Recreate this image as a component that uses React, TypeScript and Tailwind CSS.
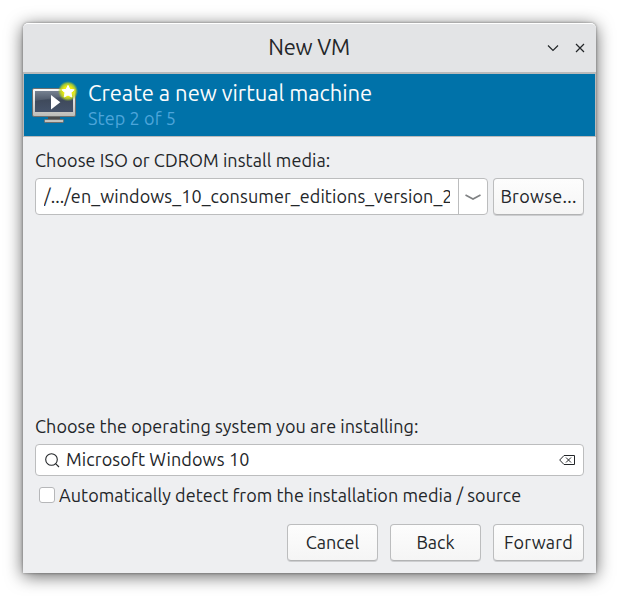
import type { ReactNode } from "react";

function MonitorIcon() {
  return (
    <svg width="48" height="46" viewBox="0 0 48 46" className="mt-[7px] block shrink-0">
      <defs>
        <linearGradient id="frame" x1="0" y1="0" x2="0" y2="1">
          <stop offset="0" stopColor="#fafafa" />
          <stop offset="1" stopColor="#bcbcb8" />
        </linearGradient>
        <linearGradient id="screen" x1="0" y1="0" x2="0" y2="1">
          <stop offset="0" stopColor="#6b7788" />
          <stop offset="0.45" stopColor="#3f4a5c" />
          <stop offset="1" stopColor="#46536a" />
        </linearGradient>
        <radialGradient id="glow">
          <stop offset="0" stopColor="#f8f800" />
          <stop offset="0.5" stopColor="#e8ea10" />
          <stop offset="0.75" stopColor="#c6d820" stopOpacity="0.8" />
          <stop offset="1" stopColor="#90c030" stopOpacity="0" />
        </radialGradient>
      </defs>
      <rect x="0.5" y="7.5" width="43" height="28" rx="1.5" fill="url(#frame)" stroke="#70706e" />
      <rect x="16" y="36" width="12" height="2.5" fill="#4c4c4c" />
      <rect x="12.5" y="38.5" width="19" height="3" rx="0.8" fill="#c4c4c0" stroke="#6e6e6c" />
      <rect x="3" y="10" width="38" height="21" fill="url(#screen)" />
      <path d="M3 10H41V14L3 20Z" fill="#fff" opacity="0.08" />
      <path d="M19 14L28.3 21.2L19 28.5Z" fill="#fff" />
      <circle cx="36" cy="10.2" r="10.2" fill="url(#glow)" />
      <path
        d="M36 4.4L37.8 8.3L42 8.8L39 11.8L39.8 16L36 14L32.2 16L33 11.8L30 8.8L34.2 8.3Z"
        fill="#fff"
        stroke="#fff"
        strokeLinejoin="round"
      />
    </svg>
  );
}

function Button({ children }: { children: ReactNode }) {
  return (
    <button className="flex h-[37px] w-[91px] shrink-0 items-center justify-center rounded-[4px] border border-[#bcbdbe] border-b-[#b2b3b4] bg-linear-to-b from-[#fdfdfd] to-[#f5f5f5] pb-px leading-6 whitespace-nowrap shadow-[0_1px_0_#cdced0]">
      {children}
    </button>
  );
}

export default function App() {
  return (
    <div className="h-[596px] w-[619px] overflow-hidden bg-white pt-[23px] pl-[23px] font-['Ubuntu','Noto_Sans',sans-serif] text-[18px] text-[#232629]">
      <div className="flex h-[550px] w-[573px] flex-col overflow-hidden rounded-t-[5px] bg-[#eeeff1] shadow-[0_3px_17px_rgba(0,0,0,0.62),0_0_3px_rgba(0,0,0,0.4)]">
        <header className="flex h-[49px] shrink-0 items-center rounded-t-[5px] border-t border-white bg-[#e3e4e6] pr-[11px]">
          <div className="w-[48px]" />
          <h1 className="flex-1 pb-[3px] text-center text-[22px] leading-7 tracking-[-0.25px]">New VM</h1>
          <div className="flex items-center gap-[16px]">
            <svg width="12" height="10" viewBox="0 0 12 10" fill="none" stroke="#232629" strokeWidth="1.2">
              <path d="M1 2.5L6 7.5L11 2.5" />
            </svg>
            <svg width="10" height="10" viewBox="0 0 10 10" fill="none" stroke="#232629" strokeWidth="1.2">
              <path d="M1 1L9 9M9 1L1 9" />
            </svg>
          </div>
        </header>

        <section className="flex h-[65px] shrink-0 border-x border-t-2 border-b border-[#b9babb] bg-[#0072a9] pl-2">
          <MonitorIcon />
          <div className="pt-[5px] pl-2">
            <h2 className="text-[22px] leading-7 tracking-[-0.03px] text-[#fcfcfc]">Create a new virtual machine</h2>
            <p className="leading-[22px] tracking-[0.1px] text-[#4da5da]">Step 2 of 5</p>
          </div>
        </section>

        <main className="flex flex-1 flex-col px-3 pt-[11px] pb-3">
          <label className="leading-6 tracking-[0.07px]">Choose ISO or CDROM install media:</label>
          <div className="mt-[6px] flex gap-[5px]">
            <div className="flex h-[37px] w-[453px] rounded-[4px] border border-[#bcbdbe] bg-white">
              <div className="mr-2 ml-2 w-[406px] shrink-0 overflow-hidden leading-[35px] tracking-[0.09px] whitespace-nowrap">
                /.../en_windows_10_consumer_editions_version_2
              </div>
              <div className="flex flex-1 items-center justify-center border-l border-[#bcbdbe]">
                <svg width="16" height="8" viewBox="0 0 16 8" fill="none" stroke="#7f8183" strokeWidth="1.6">
                  <path d="M0.5 2L8 6L15.5 2" />
                </svg>
              </div>
            </div>
            <Button>
              <span className="tracking-[0.27px]">Browse...</span>
            </Button>
          </div>

          <label className="mt-[199px] leading-6 tracking-[0.05px]">Choose the operating system you are installing:</label>
          <div className="mt-[6px] flex h-8 items-center rounded-[4px] border border-[#bcbdbe] bg-white pr-2 pl-[9px]">
            <svg width="15" height="15" viewBox="0 0 15 15" fill="none" stroke="#232629" strokeWidth="1.1">
              <circle cx="6.5" cy="6.5" r="5.8" />
              <path d="M10.6 10.6L14 14" />
            </svg>
            <span className="flex-1 pb-[2px] pl-[6px] leading-6 tracking-[0.12px]">Microsoft Windows 10</span>
            <svg width="16" height="10" viewBox="0 0 16 10" fill="none" stroke="#232629">
              <path d="M5 0.5H15.5V9.5H5L0.7 5Z" />
              <path d="M7 2.5L12 7.5M12 2.5L7 7.5" />
            </svg>
          </div>
          <label className="mt-[7px] flex items-center pl-1 leading-6 tracking-[0.04px]">
            <span className="mr-1 size-4 rounded-[3px] border border-[#b6b7b9] bg-white" />
            Automatically detect from the installation media / source
          </label>
          <div className="mt-[17px] flex justify-end gap-3">
            <Button>Cancel</Button>
            <Button>Back</Button>
            <Button>
              <span className="tracking-[0.2px]">Forward</span>
            </Button>
          </div>
        </main>
      </div>
    </div>
  );
}
